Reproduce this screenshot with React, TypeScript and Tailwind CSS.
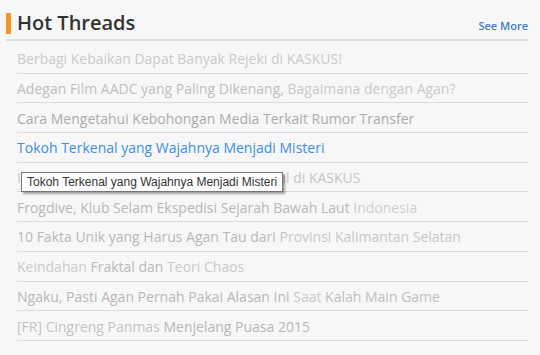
import React from 'react';

type Part = { text: string; color: string };

const THREADS: Part[][] = [
  [{ text: 'Berbagi Kebaikan Dapat Banyak Rejeki di KASKUS!', color: '#cacaca' }],
  [
    { text: 'Adegan Film AADC yang Paling Dikenang, ', color: '#bfbfbf' },
    { text: 'Bagaimana dengan Agan?', color: '#cacaca' },
  ],
  [{ text: 'Cara Mengetahui Kebohongan Media Terkait Rumor Transfer', color: '#acacac' }],
  [{ text: 'Tokoh Terkenal yang Wajahnya Menjadi Misteri', color: '#3d8fe0' }],
  [{ text: 'Inilah Sederet Kaskuser Paling Fenomenal di KASKUS', color: '#c6c6c6' }],
  [
    { text: 'Frogdive, Klub Selam Ekspedisi Sejarah Bawah Laut ', color: '#b8b8b8' },
    { text: 'Indonesia', color: '#cecece' },
  ],
  [
    { text: '10 Fakta Unik yang Harus Agan Tau dari ', color: '#b8b8b8' },
    { text: 'Provinsi Kalimantan Selatan', color: '#c8c8c8' },
  ],
  [
    { text: 'Keindahan ', color: '#cacaca' },
    { text: 'Fraktal dan ', color: '#bbbbbb' },
    { text: 'Teori Chaos', color: '#cacaca' },
  ],
  [
    { text: 'Ngaku, Pasti Agan Pernah Pakai Alasan Ini ', color: '#b8b8b8' },
    { text: 'Saat ', color: '#c8c8c8' },
    { text: 'Kalah Main Game', color: '#bfbfbf' },
  ],
  [
    { text: '[FR] Cingreng Panmas ', color: '#c4c4c4' },
    { text: 'Menjelang Puasa 2015', color: '#b8b8b8' },
  ],
];

const App: React.FC = () => {
  return (
    <div className="w-[540px] h-[355px] bg-[#f7f7f7] pl-[6px] pr-[12px] overflow-hidden font-['Open_Sans',sans-serif]">
      {/* Header */}
      <div className="h-[41px] flex items-end justify-between border-b-2 border-[#e0e0e0]">
        <div className="flex items-center h-full">
          <div className="w-[5px] h-[21px] bg-[#f7941d] mt-[7px]" />
          <h2 className="ml-[6px] mt-[6px] text-[20px] font-semibold text-[#333] leading-none">Hot Threads</h2>
        </div>
        <a className="text-[11px] font-semibold text-[#3f7fc4] mb-[8px] leading-none">See More</a>
      </div>

      {/* Thread list */}
      <ul className="ml-[11px] pt-[3px]">
        {THREADS.map((parts, i) => (
          <li key={i} className="relative h-[29.7px] flex items-center pt-[1px] border-b border-[#dcdcdc] text-[14px] whitespace-pre">
            <a>
              {parts.map((p, j) => (
                <span key={j} style={{ color: p.color }}>
                  {p.text}
                </span>
              ))}
            </a>
            {i === 3 && (
              <div className="absolute left-[4px] top-[39px] z-10 h-[20px] px-[5px] flex items-center bg-white border border-[#767676] shadow-[2px_2px_2px_rgba(0,0,0,0.35)] font-['Liberation_Sans',sans-serif] text-[12px] text-[#333]">
                Tokoh Terkenal yang Wajahnya Menjadi Misteri
              </div>
            )}
          </li>
        ))}
      </ul>
    </div>
  );
};

export default App;
